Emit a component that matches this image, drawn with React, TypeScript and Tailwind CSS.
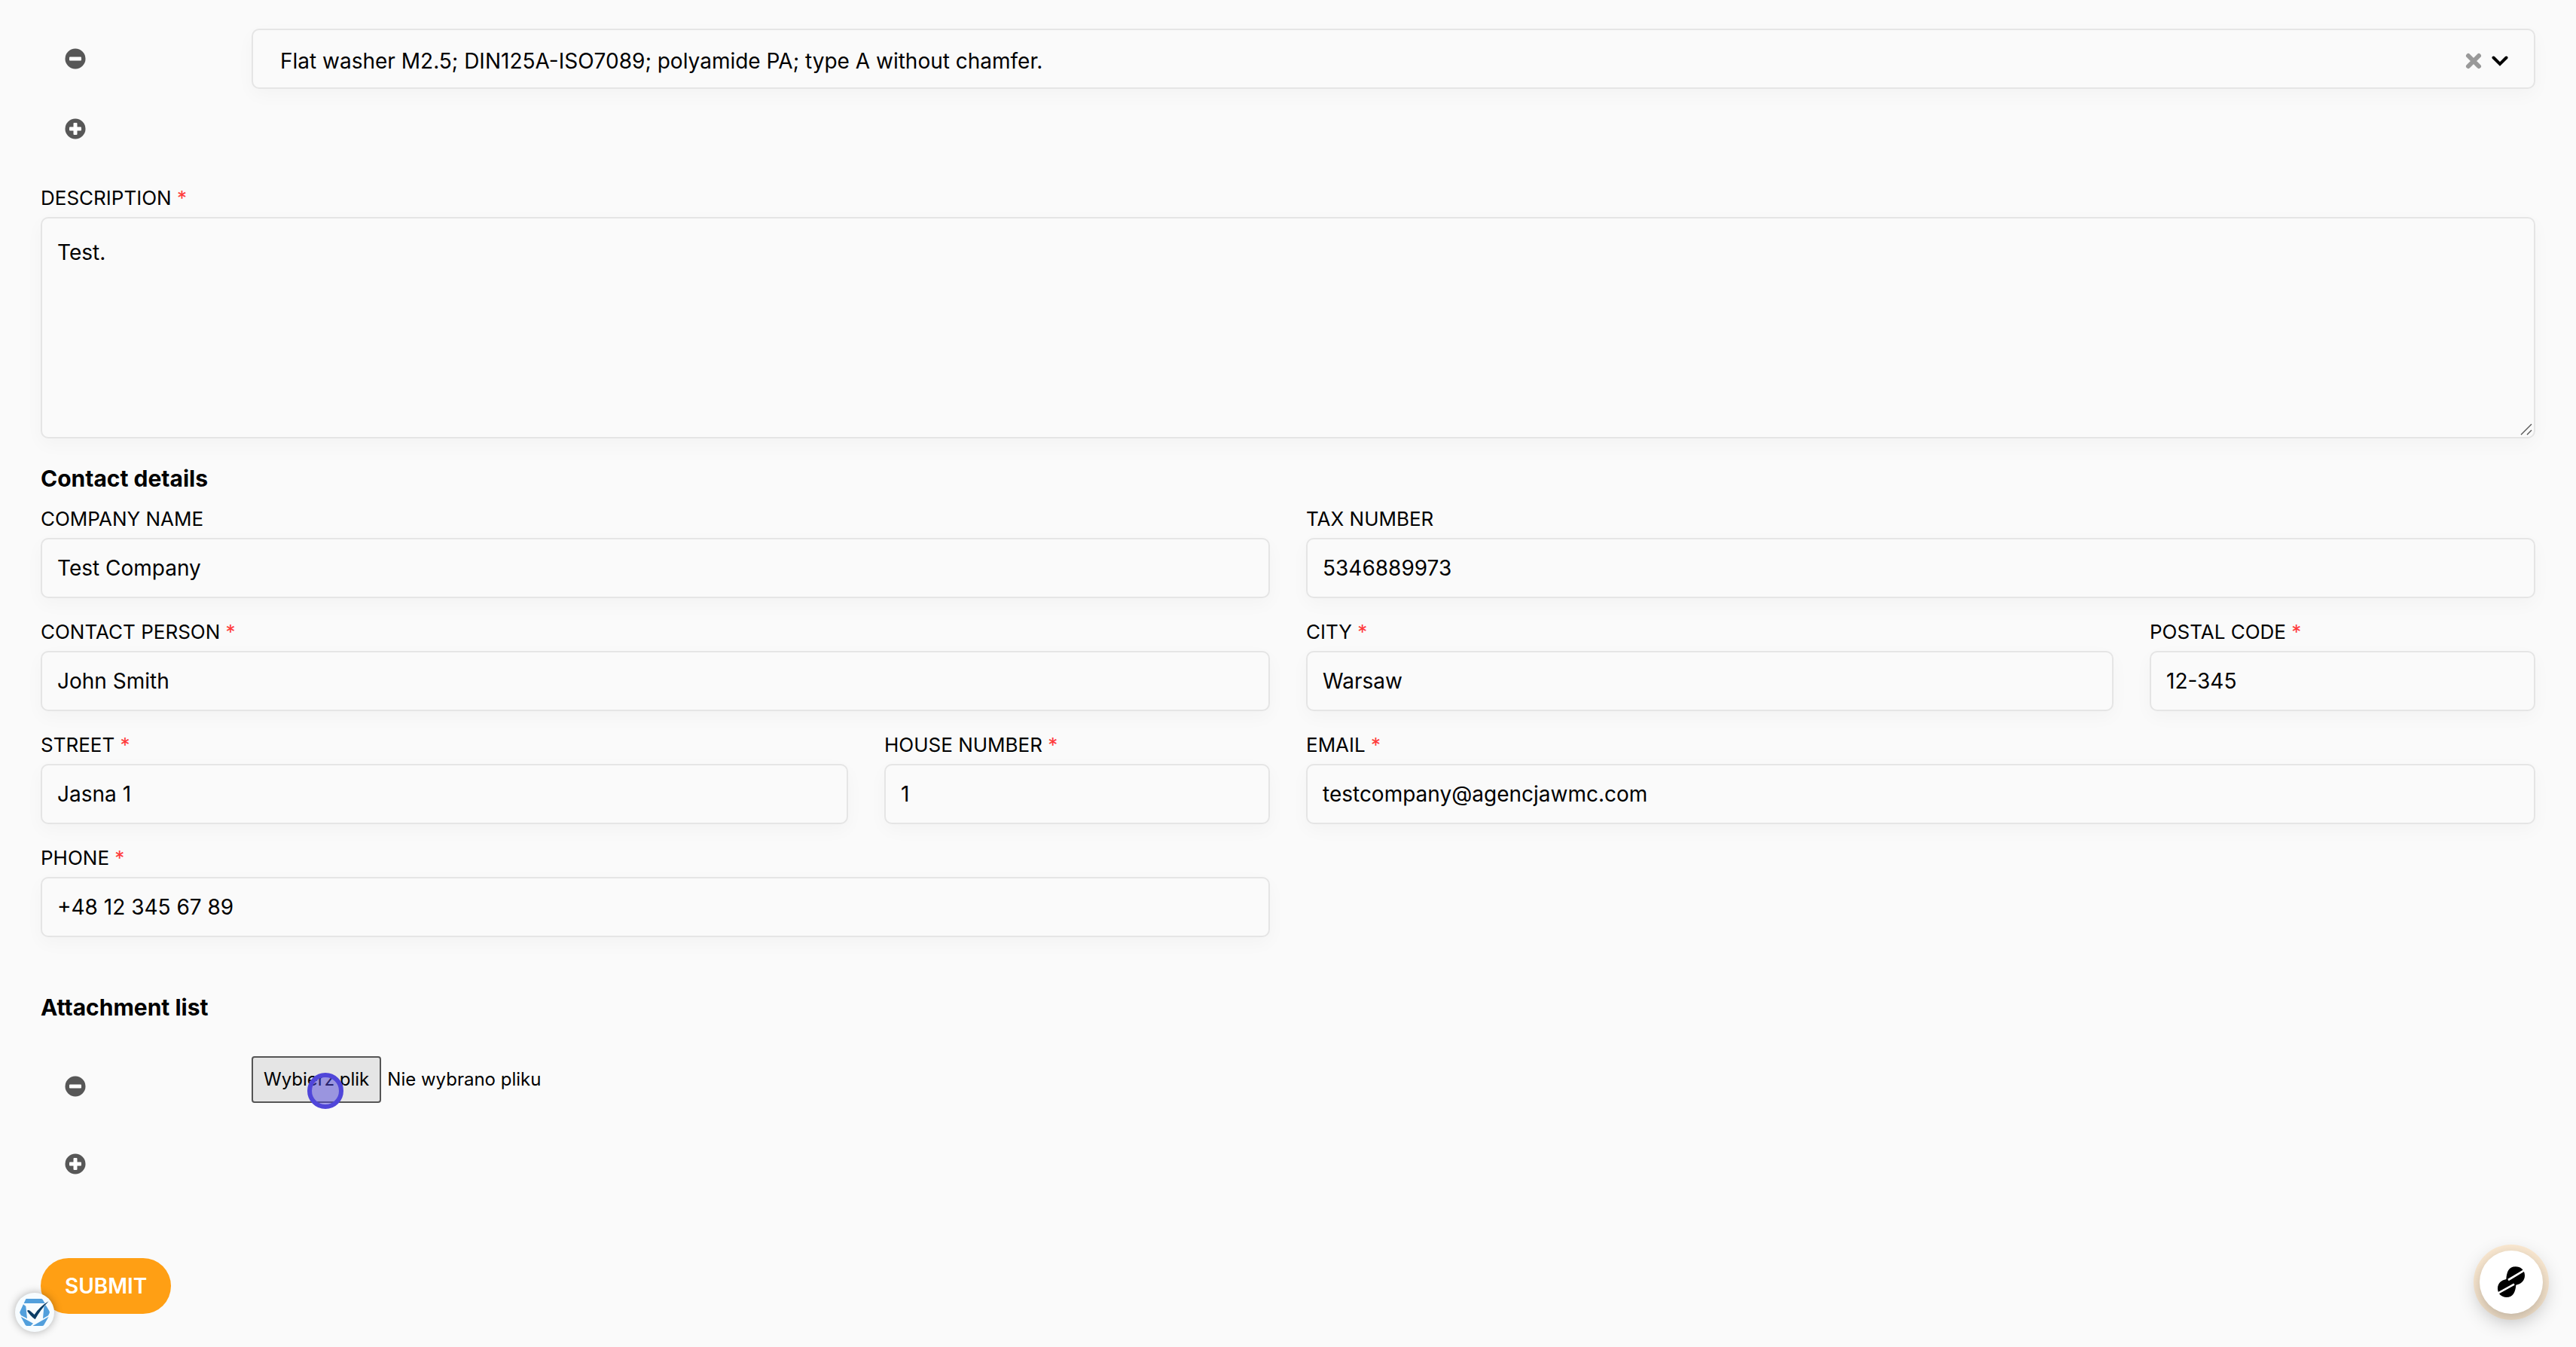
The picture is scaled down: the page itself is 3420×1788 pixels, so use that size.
import { useState } from "react";

interface Field {
  id: string;
  label: string;
  type: string;
  value: string;
  required: boolean;
  span: string;
}

const fields: Field[] = [
  { id: "company", label: "Company name", type: "text", value: "Test Company", required: false, span: "col-span-6" },
  { id: "tax", label: "Tax number", type: "text", value: "5346889973", required: false, span: "col-span-6" },
  { id: "person", label: "Contact person", type: "text", value: "John Smith", required: true, span: "col-span-6" },
  { id: "city", label: "City", type: "text", value: "Warsaw", required: true, span: "col-span-4" },
  { id: "postal", label: "Postal code", type: "text", value: "12-345", required: true, span: "col-span-2" },
  { id: "street", label: "Street", type: "text", value: "Jasna 1", required: true, span: "col-span-4" },
  { id: "house", label: "House number", type: "text", value: "1", required: true, span: "col-span-2" },
  { id: "email", label: "Email", type: "email", value: "testcompany@agencjawmc.com", required: true, span: "col-span-6" },
  { id: "phone", label: "Phone", type: "tel", value: "+48 12 345 67 89", required: true, span: "col-span-6" },
];

const PRODUCT = "Flat washer M2.5; DIN125A-ISO7089; polyamide PA; type A without chamfer.";

const boxClass =
  "block w-full rounded-[10px] border-2 border-[#e5e5e5] bg-[#fafafa] text-[28px] text-black shadow-[0_8px_24px_rgba(0,0,0,0.03)] outline-none";

function FieldLabel({ htmlFor, required, children }: { htmlFor: string; required: boolean; children: string }) {
  return (
    <label htmlFor={htmlFor} className="block pt-px pb-[7px] text-[26px] leading-9 uppercase">
      {children}
      {required && <span className="text-[#ff3b3b]"> *</span>}
    </label>
  );
}

function RoundButton({ kind }: { kind: "add" | "remove" }) {
  return (
    <button type="button" aria-label={kind === "add" ? "Add row" : "Remove row"} className="ml-8 block">
      <svg viewBox="0 0 28 28" className="size-7">
        <circle cx="14" cy="14" r="13.5" fill="#575757" />
        <rect x="6" y="11.5" width="16" height="5" rx="1" fill="#fff" />
        {kind === "add" && <rect x="11.5" y="6" width="5" height="16" rx="1" fill="#fff" />}
      </svg>
    </button>
  );
}

function ProductSelect() {
  const [product, setProduct] = useState(PRODUCT);

  return (
    <div className="relative">
      <select
        aria-label="Product"
        value={product}
        onChange={(e) => setProduct(e.target.value)}
        className={`${boxClass} h-20 appearance-none pt-1.5 pl-9 pr-32`}
      >
        <option value=""></option>
        <option value={PRODUCT}>{PRODUCT}</option>
      </select>
      <div className="pointer-events-none absolute inset-y-0 right-9 flex items-center gap-3 pt-1.5">
        <button type="button" aria-label="Clear" onClick={() => setProduct("")} className="pointer-events-auto">
          <svg viewBox="0 0 24 24" className="size-6" fill="none" stroke="#999" strokeWidth="6" strokeLinecap="round">
            <path d="M5 5 19 19M19 5 5 19" />
          </svg>
        </button>
        <svg viewBox="0 0 22 22" className="size-[22px]" fill="none" stroke="#000" strokeWidth="4" strokeLinecap="round">
          <path d="M2.5 6.5 11 15 19.5 6.5" />
        </svg>
      </div>
    </div>
  );
}

export default function App() {
  const [fileName, setFileName] = useState("Nie wybrano pliku");

  return (
    <div className="min-h-screen bg-[#fafafa] font-['Inter',sans-serif] text-black">
      <form className="px-[54px] pt-[38px] pb-11" onSubmit={(e) => e.preventDefault()}>
        <div className="grid grid-cols-12 items-center gap-x-12">
          <RoundButton kind="remove" />
          <div className="col-span-11">
            <ProductSelect />
          </div>
        </div>
        <div className="mt-[39px]">
          <RoundButton kind="add" />
        </div>

        <div className="mt-[59px]">
          <FieldLabel htmlFor="description" required>
            Description
          </FieldLabel>
          <div className="relative">
            <textarea
              id="description"
              defaultValue="Test."
              className={`${boxClass} h-[294px] resize-none px-5 py-6 leading-[42px]`}
            />
            <svg
              viewBox="0 0 16 16"
              className="pointer-events-none absolute right-1 bottom-1 size-4"
              fill="none"
              stroke="#555"
              strokeWidth="1.4"
            >
              <path d="M1 15 15 1M9 15 15 9" />
            </svg>
          </div>
        </div>

        <h2 className="mt-8 text-[30px] leading-[42px] font-bold">Contact details</h2>
        <div className="mt-3.5 grid grid-cols-12 gap-x-12 gap-y-[26px]">
          {fields.map((f) => (
            <div key={f.id} className={f.span}>
              <FieldLabel htmlFor={f.id} required={f.required}>
                {f.label}
              </FieldLabel>
              <input id={f.id} type={f.type} defaultValue={f.value} className={`${boxClass} h-20 px-5`} />
            </div>
          ))}
        </div>

        <h2 className="mt-[72px] text-[30px] leading-[42px] font-bold">Attachment list</h2>
        <div className="mt-11 grid grid-cols-12 items-center gap-x-12">
          <RoundButton kind="remove" />
          <div className="relative col-span-11 h-20">
            <label htmlFor="attachment" className="inline-flex items-center gap-2 text-[24px]">
              <span className="flex h-[62px] items-center rounded-[4px] border-2 border-[#555] bg-[#e5e5e5] px-[14px]">
                Wybierz plik
              </span>
              <span>{fileName}</span>
            </label>
            <input
              id="attachment"
              type="file"
              className="sr-only"
              onChange={(e) => setFileName(e.target.files?.[0]?.name ?? "Nie wybrano pliku")}
            />
            {/* click marker */}
            <span className="pointer-events-none absolute top-[22px] left-[74px] size-12 rounded-full border-[6px] border-[#5046d9] bg-[#5046d9]/50" />
          </div>
        </div>
        <div className="mt-[49px]">
          <RoundButton kind="add" />
        </div>

        <button
          type="submit"
          className="mt-[111px] block h-[74px] rounded-full bg-[#ff9f14] px-8 text-[28px] font-semibold text-white uppercase"
        >
          Submit
        </button>
      </form>

      <button
        type="button"
        aria-label="Privacy settings"
        className="fixed bottom-5 left-5 size-[52px] rounded-full bg-[#f7fcff] shadow-[0_0_12px_rgba(0,0,0,0.3)]"
      >
        <svg viewBox="60 228 156 156" className="size-full">
          <g fill="#519fdc">
            <path d="M105 252H164Q168 252 170 255L179 270H95L102 255Q103 252 105 252Z" />
            <path d="M93 274 103 282 108 331 84 318 79 308Q78 305 80 302Z" />
            <path d="M182 277 196 300Q199 305 197 309L192 319 171 331 175 284Z" />
            <path d="M83 323 132 350 122 360H108Q104 360 101 356Z" />
            <path d="M194 323 175 356Q173 360 168 360H130Z" />
          </g>
          <path d="M108 300Q112 295 119 299L137 315Q160 281 194 262Q162 294 140 334Q122 322 108 300Z" fill="#0b3d66" />
        </svg>
      </button>

      <button
        type="button"
        aria-label="Open assistant"
        className="fixed right-11 bottom-11 size-[84px] rounded-full bg-white shadow-[0_8px_28px_rgba(0,0,0,0.3),0_0_0_8px_#ffedd5]"
      >
        <svg viewBox="156 120 252 252" className="size-full">
          <path
            d="M299 184C320 184 336 198 336 219C336 240 321 254 301 257C299 284 290 306 263 306C243 306 228 292 228 271C228 250 242 238 262 234C264 206 272 184 299 184Z"
            fill="#000"
          />
          <path d="M270 237 338 196M225 292 294 254" stroke="#fff" strokeWidth="8" fill="none" />
        </svg>
      </button>
    </div>
  );
}
